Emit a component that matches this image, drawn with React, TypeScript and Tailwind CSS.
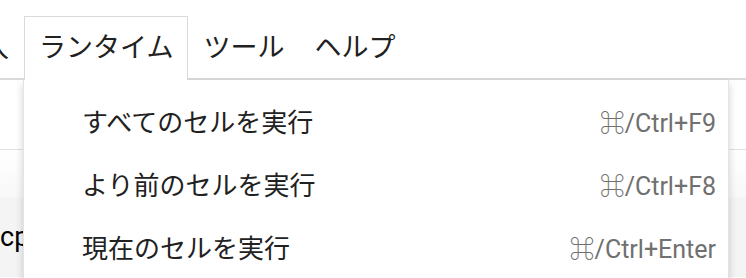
import React from 'react';

const menus = ['挿入', 'ランタイム', 'ツール', 'ヘルプ'];

const items = [
  { label: 'すべてのセルを実行', shortcut: '⌘/Ctrl+F9' },
  { label: 'より前のセルを実行', shortcut: '⌘/Ctrl+F8' },
  { label: '現在のセルを実行', shortcut: '⌘/Ctrl+Enter' },
];

const App: React.FC = () => {
  return (
    <div className="relative w-[746px] h-[278px] overflow-hidden bg-white font-[Roboto,'Noto_Sans_CJK_JP',sans-serif] text-[#212121]">
      {/* menu bar */}
      <div className="flex h-[80px] items-end border-b-2 border-[#dadada]">
        <div className="flex ml-[-60px]">
          {menus.map(m => (
            <div
              key={m}
              className={`relative z-20 mb-[-2px] flex h-[64px] items-center px-[14px] text-[27px] border-x border-t ${
                m === 'ランタイム' ? 'border-[#dadada] bg-white' : 'border-transparent'
              }`}
            >
              {m}
            </div>
          ))}
        </div>
      </div>

      {/* page behind the menu */}
      <div className="h-[70px] border-b border-[#e0e0e0]" />
      <div className="h-[47px] bg-gradient-to-b from-white to-[#f8f8f8]" />
      <div className="h-[80px] bg-[#f4f4f4] pt-[25px]">
        <div className="text-[27px] leading-[30px] text-black">cp</div>
      </div>

      {/* dropdown */}
      <div className="absolute left-[23px] top-[80px] z-10 w-[706px] h-[210px] bg-white border-x border-[#e4e4e4] shadow-[0_4px_8px_rgba(0,0,0,0.18)] pt-[12px]">
        {items.map(it => (
          <div key={it.label} className="flex h-[63px] items-center justify-between pl-[58px] pr-[12px]">
            <span className="text-[26px]">{it.label}</span>
            <span className="text-[25px] text-[#707070]">{it.shortcut}</span>
          </div>
        ))}
      </div>
    </div>
  );
};

export default App;
